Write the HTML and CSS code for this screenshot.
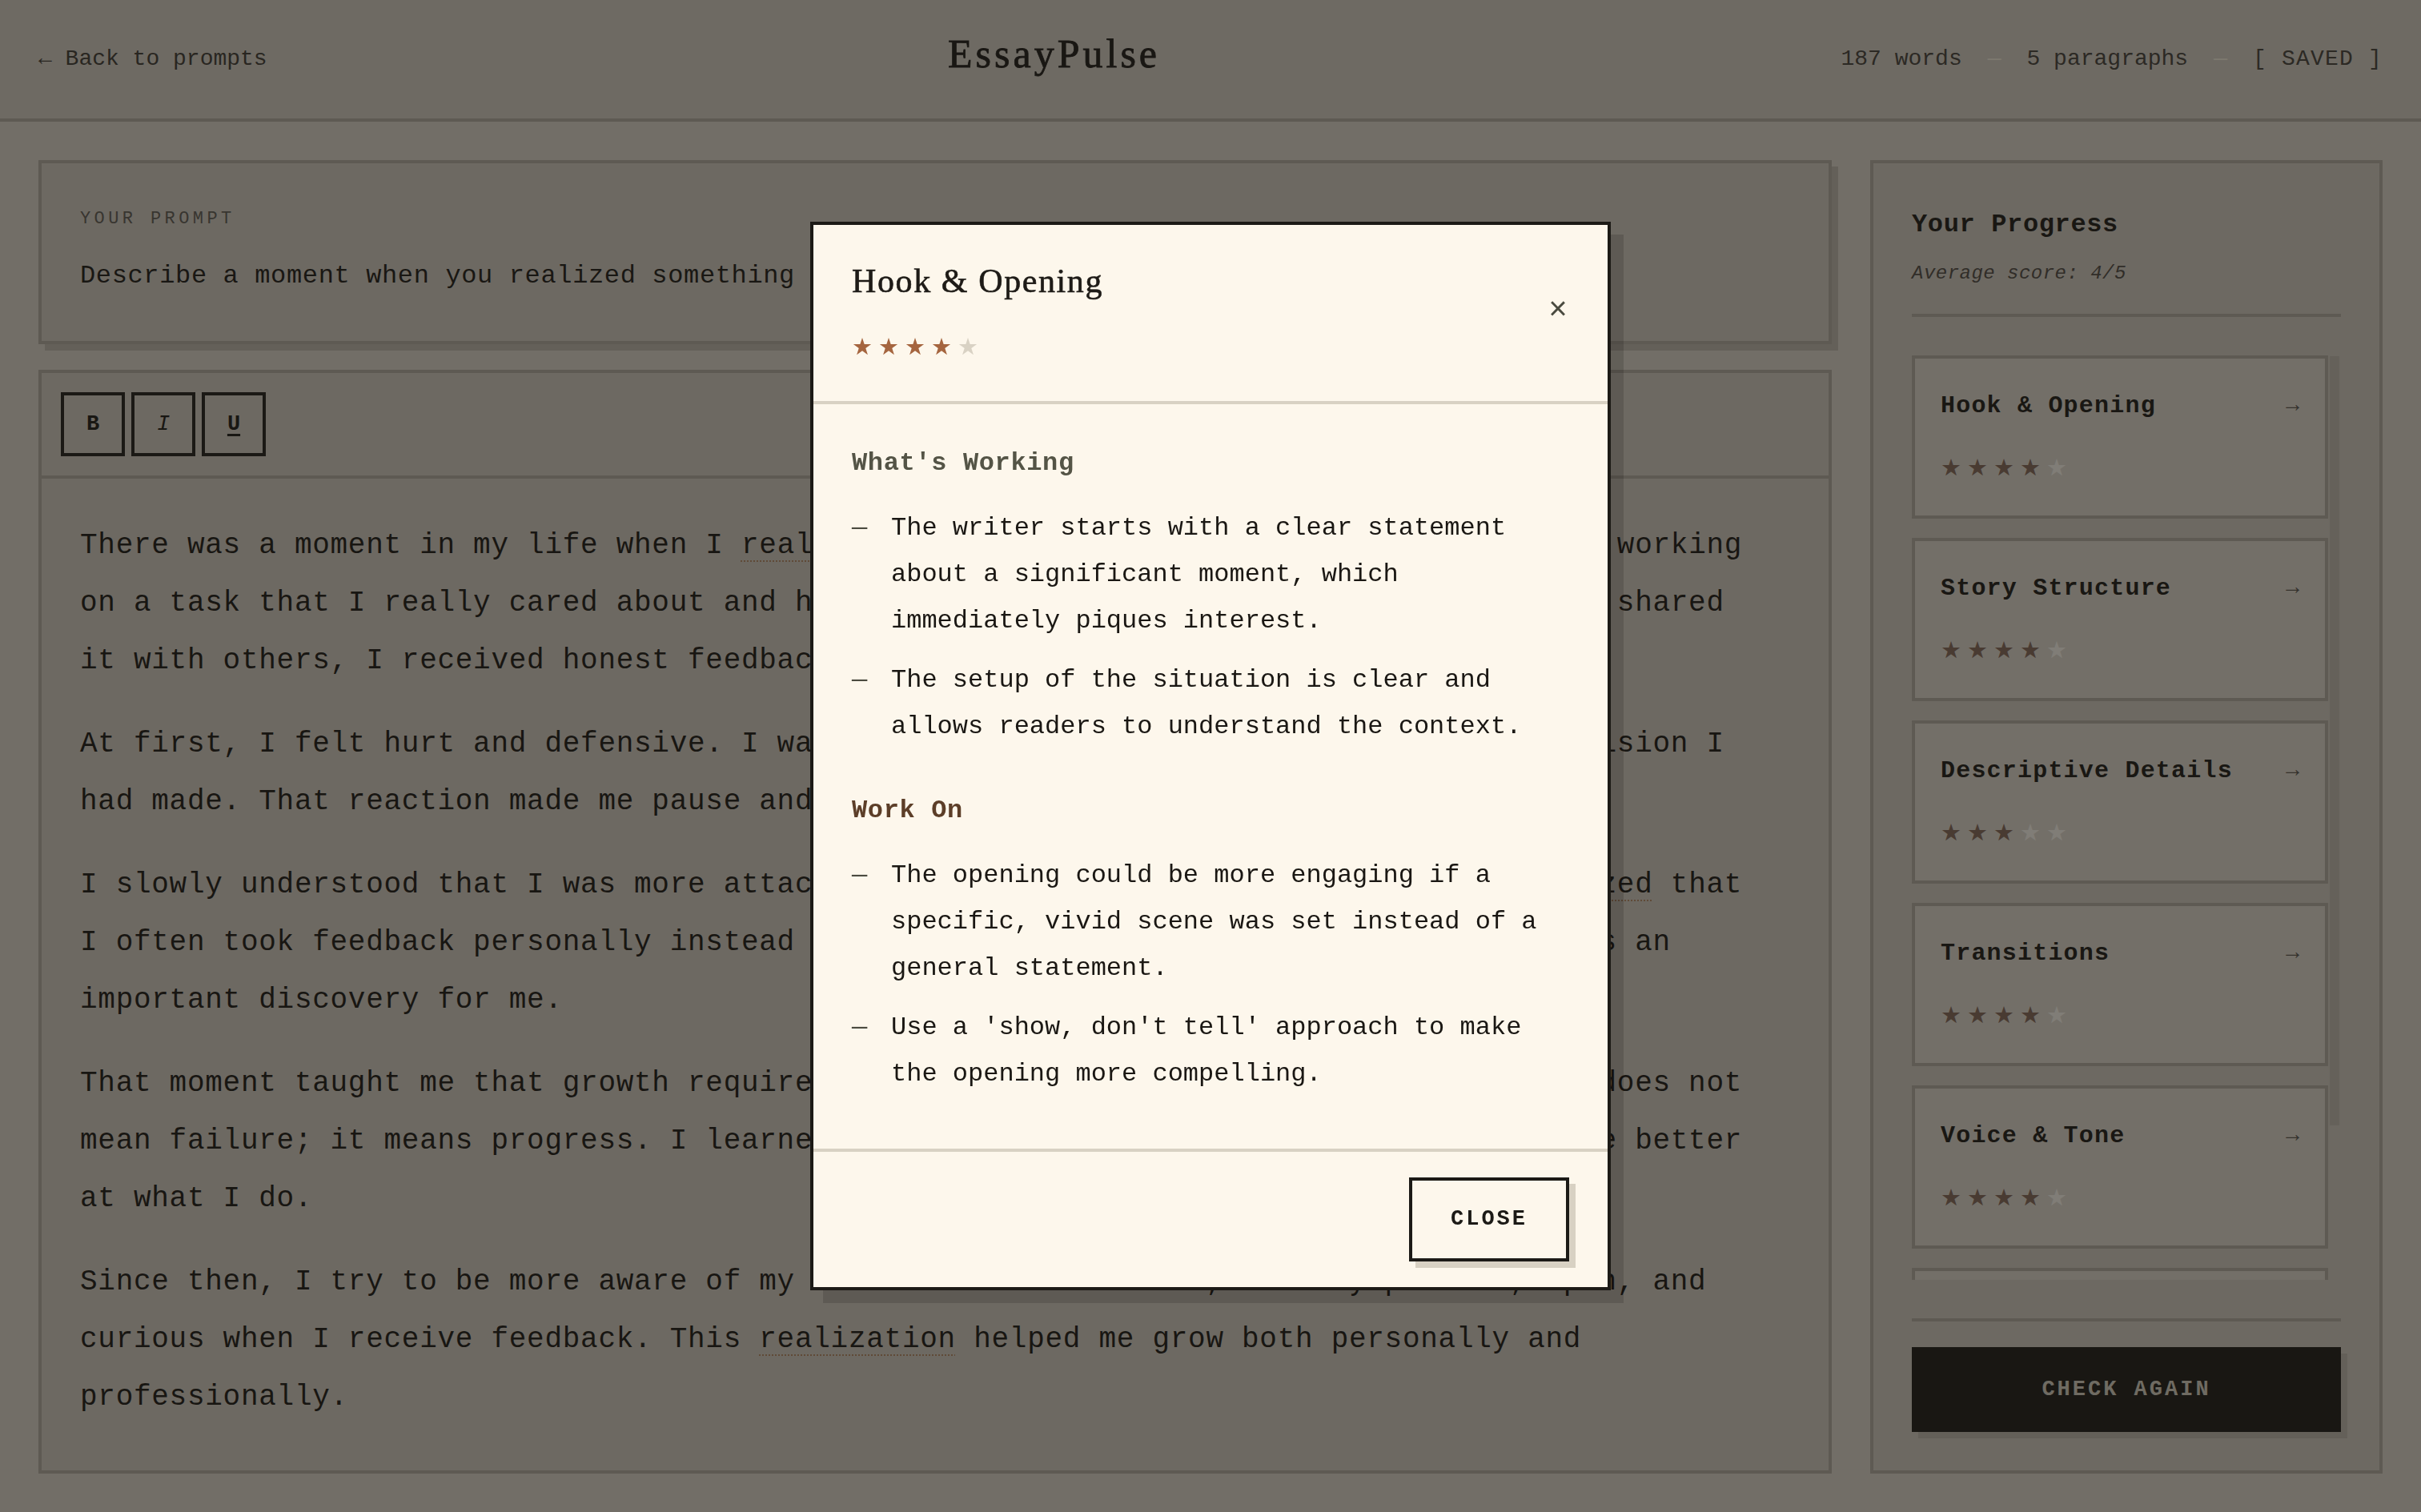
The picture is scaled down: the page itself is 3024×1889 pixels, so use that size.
FILE: index.html
```html
<!DOCTYPE html>
<html lang="en">
<head>
<meta charset="utf-8">
<title>EssayPulse</title>
<link rel="stylesheet" href="styles.css">
</head>
<body>
<header class="topbar">
  <a class="back" href="#">← Back to prompts</a>
  <h1 class="brand">EssayPulse</h1>
  <div class="stats">
    <span>187 words</span>
    <span class="sep">—</span>
    <span>5 paragraphs</span>
    <span class="sep">—</span>
    <span class="saved">[ SAVED ]</span>
  </div>
</header>

<main class="workspace">
  <section class="left">
    <div class="prompt-card">
      <div class="prompt-label">YOUR PROMPT</div>
      <p class="prompt-text">Describe a moment when you realized something important about yourself.</p>
    </div>

    <div class="editor">
      <div class="toolbar">
        <button class="tool tool-b">B</button>
        <button class="tool tool-i">I</button>
        <button class="tool tool-u">U</button>
      </div>
      <div class="editor-body">
        <p>There was a moment in my life when I <span class="flag">realized</span> something important about myself. I was working on a task that I really cared about and had been working on for weeks. When I finally shared it with others, I received honest feedback that pointed out several weaknesses.</p>
        <p>At first, I felt hurt and defensive. I wanted to explain and justify every single decision I had made. That reaction made me pause and reflect on why I felt that way.</p>
        <p>I slowly understood that I was more attached to being right than to learning. I <span class="flag">realized</span> that I often took feedback personally instead of seeing it as a chance to improve. This was an important discovery for me.</p>
        <p>That moment taught me that growth requires openness and humility. Receiving critique does not mean failure; it means progress. I learned to embrace feedback, because it helps me be better at what I do.</p>
        <p>Since then, I try to be more aware of my emotions and reactions, to stay patient, open, and curious when I receive feedback. This <span class="flag">realization</span> helped me grow both personally and professionally.</p>
      </div>
    </div>
  </section>

  <aside class="sidebar">
    <div class="side-head">
      <h2 class="side-title">Your Progress</h2>
      <p class="side-avg">Average score: 4/5</p>
    </div>
    <div class="criteria-wrap">
      <div class="criteria">
        <div class="crit">
          <div class="crit-row"><span class="crit-name">Hook &amp; Opening</span><span class="crit-arrow">→</span></div>
          <div class="stars crit-stars">★★★★<span class="off">★</span></div>
        </div>
        <div class="crit">
          <div class="crit-row"><span class="crit-name">Story Structure</span><span class="crit-arrow">→</span></div>
          <div class="stars crit-stars">★★★★<span class="off">★</span></div>
        </div>
        <div class="crit">
          <div class="crit-row"><span class="crit-name">Descriptive Details</span><span class="crit-arrow">→</span></div>
          <div class="stars crit-stars">★★★<span class="off">★★</span></div>
        </div>
        <div class="crit">
          <div class="crit-row"><span class="crit-name">Transitions</span><span class="crit-arrow">→</span></div>
          <div class="stars crit-stars">★★★★<span class="off">★</span></div>
        </div>
        <div class="crit">
          <div class="crit-row"><span class="crit-name">Voice &amp; Tone</span><span class="crit-arrow">→</span></div>
          <div class="stars crit-stars">★★★★<span class="off">★</span></div>
        </div>
        <div class="crit crit-last"></div>
      </div>
      <div class="scroll-track"><div class="scroll-thumb"></div></div>
    </div>
    <div class="side-foot">
      <button class="check">CHECK AGAIN</button>
    </div>
  </aside>
</main>

<div class="backdrop">
  <div class="modal" role="dialog">
    <div class="modal-head">
      <div class="modal-heading">
        <h3 class="modal-title">Hook &amp; Opening</h3>
        <div class="stars modal-stars">★★★★<span class="off">★</span></div>
      </div>
      <button class="modal-x">×</button>
    </div>
    <div class="modal-body">
      <section class="fb">
        <h4 class="fb-title fb-good">What's Working</h4>
        <ul class="fb-list">
          <li><span class="dash">—</span><span>The writer starts with a clear statement about a significant moment, which immediately piques interest.</span></li>
          <li><span class="dash">—</span><span>The setup of the situation is clear and allows readers to understand the context.</span></li>
        </ul>
      </section>
      <section class="fb">
        <h4 class="fb-title fb-work">Work On</h4>
        <ul class="fb-list">
          <li><span class="dash">—</span><span>The opening could be more engaging if a specific, vivid scene was set instead of a general statement.</span></li>
          <li><span class="dash">—</span><span>Use a 'show, don't tell' approach to make the opening more compelling.</span></li>
        </ul>
      </section>
    </div>
    <div class="modal-foot">
      <button class="close-btn">CLOSE</button>
    </div>
  </div>
</div>
</body>
</html>
```

FILE: styles.css
```css
html, body {
  margin: 0;
  padding: 0;
}

html {
  background: #e0dacf;
}

body {
  height: 100vh;
  display: flex;
  flex-direction: column;
  font-family: "Liberation Mono", "DejaVu Sans Mono", monospace;
  color: #1c1915;
  overflow: hidden;
}

button {
  font-family: inherit;
  cursor: pointer;
}

/* ---------- top bar ---------- */
.topbar {
  flex: none;
  box-sizing: border-box;
  height: 152px;
  padding: 0 48px;
  display: flex;
  align-items: center;
  justify-content: space-between;
  background: #d7d1c6;
  border-bottom: 4px solid #b4ada2;
}

.back {
  font-size: 28px;
  line-height: 40px;
  color: #3e3a34;
  text-decoration: none;
}

.brand {
  margin: 0 0 14px;
  font-family: "Liberation Serif", "DejaVu Serif", serif;
  font-weight: normal;
  font-size: 50px;
  line-height: 60px;
  letter-spacing: 4px;
  color: #1c1915;
  -webkit-text-stroke: 0.8px #1c1915;
}

.stats {
  display: flex;
  align-items: center;
  gap: 32px;
  font-size: 28px;
  line-height: 40px;
  color: #46413b;
}

.stats .sep {
  color: #f9f2e1;
}

.stats .saved {
  letter-spacing: 1.2px;
}

/* ---------- workspace ---------- */
.workspace {
  flex: 1;
  min-height: 0;
  display: grid;
  grid-template-columns: 1fr 640px;
  gap: 48px;
  padding: 48px;
}

.left {
  min-height: 0;
  display: flex;
  flex-direction: column;
  gap: 32px;
}

.prompt-card {
  flex: none;
  padding: 48px 48px 52px;
  background: #d5cec4;
  border: 4px solid #b4ada2;
  box-shadow: 8px 8px 0 #c1bab0;
}

.prompt-label {
  font-size: 22px;
  line-height: 44px;
  letter-spacing: 0.2em;
  color: #615c54;
}

.prompt-text {
  margin: 20px 0 0;
  font-size: 32px;
  line-height: 58px;
  letter-spacing: 0.02em;
  color: #1c1915;
}

.editor {
  flex: 1;
  min-height: 0;
  display: flex;
  flex-direction: column;
  background: #d5cec4;
  border: 4px solid #b4ada2;
}

.toolbar {
  flex: none;
  display: flex;
  gap: 8px;
  padding: 24px;
  border-bottom: 4px solid #b4ada2;
}

.tool {
  width: 80px;
  height: 80px;
  box-sizing: border-box;
  padding: 0;
  background: transparent;
  border: 4px solid #1f1d19;
  color: #1c1915;
  font-size: 27px;
  line-height: 1;
}

.tool-b { font-weight: bold; }
.tool-i { font-style: italic; }
.tool-u { font-weight: bold; text-decoration: underline; text-underline-offset: 5px; text-decoration-thickness: 3px; }

.editor-body {
  flex: 1;
  min-height: 0;
  overflow: hidden;
  padding: 48px 74px 48px 48px;
  font-size: 36px;
  line-height: 72px;
  letter-spacing: 0.02em;
  color: #1a1713;
}

.editor-body p {
  margin: 0 0 32px;
}

.editor-body p:last-child {
  margin-bottom: 0;
}

.flag {
  text-decoration: underline dotted #b58a64;
  text-decoration-thickness: 2px;
  text-underline-offset: 9px;
}

/* ---------- sidebar ---------- */
.sidebar {
  min-height: 0;
  display: flex;
  flex-direction: column;
  padding: 48px;
  background: #d5cec4;
  border: 4px solid #b4ada2;
}

.side-head {
  flex: none;
  padding-bottom: 32px;
  border-bottom: 4px solid #b4ada2;
}

.side-title {
  margin: 0;
  font-size: 32px;
  line-height: 58px;
  letter-spacing: 0.02em;
  font-weight: bold;
  color: #1c1915;
}

.side-avg {
  margin: 14px 0 0;
  font-size: 24px;
  line-height: 36px;
  font-style: italic;
  letter-spacing: 0.02em;
  color: #504b44;
}

.criteria-wrap {
  flex: 1;
  min-height: 0;
  margin-top: 48px;
  display: flex;
}

.criteria {
  flex: 1;
  min-width: 0;
  overflow: hidden;
  display: flex;
  flex-direction: column;
  gap: 24px;
}

.scroll-track {
  flex: none;
  width: 16px;
  box-sizing: border-box;
  padding: 1px 2px;
}

.scroll-thumb {
  height: 961px;
  background: #c3bdb2;
}

.crit {
  flex: none;
  padding: 32px;
  background: #e2dcd1;
  border: 4px solid #b4ada2;
}

.crit-last {
  height: 140px;
}

.crit-row {
  display: flex;
  align-items: center;
  justify-content: space-between;
}

.crit-name {
  font-size: 30px;
  line-height: 54px;
  font-weight: bold;
  letter-spacing: 0.04em;
  color: #1c1915;
}

.crit-arrow {
  font-size: 28px;
  line-height: 54px;
  color: #5a554e;
}

.stars {
  font-family: "DejaVu Sans", sans-serif;
  font-size: 29px;
  letter-spacing: 7px;
  white-space: nowrap;
}

.crit-stars {
  margin-top: 22px;
  line-height: 56px;
  color: #86695a;
}

.crit-stars .off {
  color: #fffaf2;
}

.side-foot {
  flex: none;
  margin-top: 48px;
  padding-top: 32px;
  border-top: 4px solid #b4ada2;
}

.check {
  display: block;
  width: 100%;
  padding: 39px 0;
  border: 0;
  background: #1c1a14;
  color: #d9d3c4;
  font-size: 27px;
  line-height: 28px;
  font-weight: bold;
  letter-spacing: 3px;
  box-shadow: 8px 8px 0 #c1bab0;
}

/* ---------- modal ---------- */
.backdrop {
  position: fixed;
  inset: 0;
  display: flex;
  align-items: center;
  justify-content: center;
  background: rgba(24, 22, 18, 0.55);
}

.modal {
  width: 1000px;
  box-sizing: border-box;
  background: #fdf7ec;
  border: 4px solid #1c1a16;
  box-shadow: 16px 16px 0 rgba(0, 0, 0, 0.14);
}

.modal-head {
  display: flex;
  align-items: center;
  justify-content: space-between;
  padding: 44px 48px 48px;
  border-bottom: 4px solid #d8d1c3;
}

.modal-title {
  margin: 0;
  font-family: "Liberation Serif", "DejaVu Serif", serif;
  font-weight: normal;
  font-size: 42px;
  line-height: 52px;
  letter-spacing: 1.6px;
  color: #1e1b17;
  -webkit-text-stroke: 0.6px #1e1b17;
}

.modal-stars {
  margin-top: 36px;
  line-height: 40px;
  color: #a5653f;
}

.modal-stars .off {
  color: #d9d2c4;
}

.modal-x {
  padding: 0 2px 0 0;
  border: 0;
  background: none;
  font-size: 40px;
  line-height: 1;
  color: #4b4b40;
}

.modal-body {
  padding: 56px 48px 48px;
  border-bottom: 4px solid #d8d1c3;
}

.fb + .fb {
  margin-top: 58px;
}

.fb-title {
  margin: 0 0 34px;
  font-size: 32px;
  line-height: 36px;
  font-weight: bold;
  letter-spacing: 0.02em;
}

.fb-good { color: #545446; }
.fb-work { color: #5c3e28; }

.fb-list {
  list-style: none;
  margin: 0;
  padding: 0;
}

.fb-list li {
  display: flex;
  margin-bottom: 16px;
  font-size: 32px;
  line-height: 58px;
  color: #1a1713;
}

.fb-list .dash {
  flex: none;
  width: 49px;
  color: #4b4b40;
}

.modal-foot {
  display: flex;
  justify-content: flex-end;
  padding: 32px 48px;
}

.close-btn {
  padding: 35px 48px;
  background: transparent;
  border: 4px solid #1c1a16;
  color: #1c1a16;
  font-size: 27px;
  line-height: 27px;
  font-weight: bold;
  letter-spacing: 3px;
  box-shadow: 8px 8px 0 #d8d1c3;
}
```
